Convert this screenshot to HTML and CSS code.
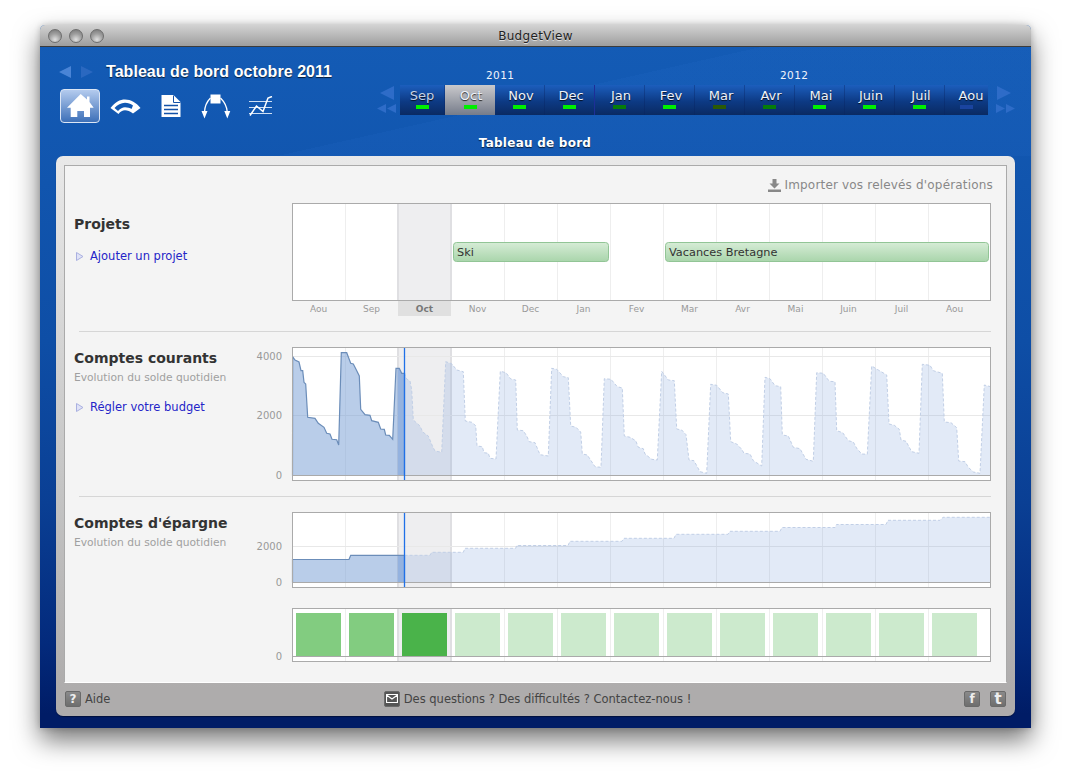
FILE: index.html
```html
<!DOCTYPE html>
<html lang="fr">
<head>
    <meta charset="UTF-8">
    <title>BudgetView</title>
    <link rel="stylesheet" href="styles.css">
</head>
<body>
<div class="window">
    <div class="titlebar">
        <div class="lights"><span class="light"></span><span class="light"></span><span class="light"></span></div>
        <div class="window-title">BudgetView</div>
    </div>

    <div class="header">
        <div class="header-top">
            <div class="nav">
                <div class="nav-title">
                    <svg class="nav-arrows" width="35" height="14" viewBox="0 0 35 14">
                        <path d="M0 7 12 1V13Z" fill="#4a84d6"/>
                        <path d="M22 1 34 7 22 13Z" fill="#2a68c0"/>
                    </svg>
                    <h1>Tableau de bord octobre 2011</h1>
                </div>
                <div class="nav-icons">
                    <div class="home-btn">
                        <svg width="40" height="34" viewBox="60 88 40 34">
                            <path fill="#fff" fill-rule="evenodd" d="M80.7 93 87 98.6V95.5H89.5V100.9L93.7 106.8H90V116H84V110H77.3V116H70.7V106.8H67Z"/>
                        </svg>
                    </div>
                    <svg class="nav-icon nav-icon-gauge" width="32" height="20" viewBox="110 94 32 20">
                        <path fill="#fff" fill-rule="evenodd" d="M110.5 106C115 100 120 97.5 125 97.5C131 97.5 136 100.5 140.5 106L133 111.5C130 109 127.5 108.300 125 108.300C122.500 108.300 120.500 109.500 118.500 112ZM114.500 106 118 109C120.500 106.500 122.500 105.300 125 105.300C127.500 105.300 130 106 131.500 107L133 103.500C130.500 101.500 128 100.700 125 100.700C121 100.700 117.500 102.800 114.500 106Z"/>
                    </svg>
                    <svg class="nav-icon" width="20" height="23" viewBox="161 94 20 23">
                        <path fill="#fff" d="M161.500 94H173.500L180.500 101V116H161.500Z"/>
                        <path stroke="#1352a8" fill="none" d="M173.500 94.500V101.500H180.500"/>
                        <path stroke="#1352a8" stroke-width="1.500" d="M164 104.500H178M164 108.500H178M164 112.500H178"/>
                    </svg>
                    <svg class="nav-icon" width="32" height="25" viewBox="200 92 32 25">
                        <path fill="#fff" d="M210.500 92.500H220.500V101.500H210.500Z"/>
                        <path fill="none" stroke="#fff" stroke-width="1.300" d="M210.500 96C207 99.500 204.800 104 204.500 110M220.500 96C224 99.500 226.800 104 227.300 110"/>
                        <path fill="#fff" d="M201.500 109H207.500L204.500 116.500ZM224.300 109H230.300L227.300 116.500Z"/>
                    </svg>
                    <svg class="nav-icon nav-icon-chart" width="24" height="21" viewBox="249 95 24 21">
                        <path stroke="#cfe0f5" stroke-width="1" d="M249 100.500H272M249 106.500H272M249 112.500H272"/>
                        <path fill="none" stroke="#fff" stroke-width="1.500" d="M250 114.500 256.500 105 263 110.500 268 97 272 95.500"/>
                    </svg>
                </div>
            </div>

            <div class="timeline">
                <div class="years">
                    <span class="year year-2011">2011</span>
                    <span class="year year-2012">2012</span>
                </div>
                <div class="timeline-row">
                    <svg class="scroll" width="22" height="30" viewBox="0 0 22 30">
                        <path d="M4 8 18 1V15ZM1 23.500 10 19V28ZM11 23.500 20 19V28Z" fill="#2e6cc8"/>
                    </svg>
                    <div class="months">
                        <div class="month month-first"><span>Sep</span><i class="lvl ok"></i></div>
                        <div class="month selected"><span>Oct</span><i class="lvl ok"></i></div>
                        <div class="month"><span>Nov</span><i class="lvl ok"></i></div>
                        <div class="month year-end"><span>Dec</span><i class="lvl ok"></i></div>
                        <div class="month"><span>Jan</span><i class="lvl mid"></i></div>
                        <div class="month"><span>Fev</span><i class="lvl ok"></i></div>
                        <div class="month"><span>Mar</span><i class="lvl low"></i></div>
                        <div class="month"><span>Avr</span><i class="lvl mid"></i></div>
                        <div class="month"><span>Mai</span><i class="lvl ok"></i></div>
                        <div class="month"><span>Juin</span><i class="lvl ok"></i></div>
                        <div class="month"><span>Juil</span><i class="lvl ok"></i></div>
                        <div class="month month-last"><span>Aou</span><i class="lvl none"></i></div>
                    </div>
                    <svg class="scroll" width="24" height="30" viewBox="0 0 24 30">
                        <path d="M20 8 6 1V15ZM14 23.500 5 19V28ZM24 23.500 15 19V28Z" fill="#2e6cc8"/>
                    </svg>
                </div>
            </div>
        </div>
        <div class="page-title">Tableau de bord</div>
    </div>

    <div class="panel">
        <div class="content">
            <div class="import">
                <svg width="13" height="13" viewBox="0 0 13 13">
                    <path fill="#888" d="M4.500 0H8.500V4.500H11.500L6.500 9.500 1.500 4.500H4.500ZM0 10.500H13V13H0Z"/>
                </svg>
                <span>Importer vos relevés d'opérations</span>
            </div>

            <section class="row">
                <div class="side side-projects">
                    <h2>Projets</h2>
                    <a class="link link-projects"><svg width="8" height="9" viewBox="0 0 8 9"><path d="M.5.5 7 4.500.5 8.500Z" fill="#dfe2f6" stroke="#aab0e0"/></svg>Ajouter un projet</a>
                </div>
                <div class="charts">
                    <svg class="chart" width="741" height="98" viewBox="250 203 741 98">
                        <defs>
                            <linearGradient id="barFill" x1="0" y1="0" x2="0" y2="1">
                                <stop offset="0" stop-color="#d6ecd6"/>
                                <stop offset="1" stop-color="#a9d5ab"/>
                            </linearGradient>
                            <g id="columns">
                                <rect x="398" y="0" width="53" height="800" fill="#eeeef0"/>
                                <path stroke="#eeeeee" d="M345.500 0V800M504.500 0V800M557.500 0V800M610.500 0V800M663.500 0V800M716.500 0V800M769.500 0V800M822.500 0V800M875.500 0V800M928.500 0V800"/>
                                <path stroke="#dfdfe2" stroke-width="2" d="M398 0V800M451 0V800"/>
                            </g>
                            <clipPath id="pastClip"><rect x="398" y="340" width="6.500" height="260"/></clipPath>
                        </defs>
                        <rect x="292" y="203" width="699" height="98" fill="#fff"/>
                        <use href="#columns"/>
                        <rect class="bar" x="453.500" y="242.500" width="155" height="19" rx="3"/>
                        <text class="bar-label" x="457" y="256">Ski</text>
                        <rect class="bar" x="665.500" y="242.500" width="323" height="19" rx="3"/>
                        <text class="bar-label" x="669" y="256">Vacances Bretagne</text>
                        <rect class="frame" x="292.500" y="203.500" width="698" height="97"/>
                    </svg>
                    <div class="axis">
                        <span>Aou</span><span>Sep</span><span class="axis-current">Oct</span><span>Nov</span><span>Dec</span><span>Jan</span><span>Fev</span><span>Mar</span><span>Avr</span><span>Mai</span><span>Juin</span><span>Juil</span><span>Aou</span>
                    </div>
                </div>
            </section>

            <hr class="divider">

            <section class="row">
                <div class="side">
                    <h2>Comptes courants</h2>
                    <p class="sub">Evolution du solde quotidien</p>
                    <a class="link link-budget"><svg width="8" height="9" viewBox="0 0 8 9"><path d="M.5.5 7 4.500.5 8.500Z" fill="#dfe2f6" stroke="#aab0e0"/></svg>Régler votre budget</a>
                </div>
                <div class="charts">
                    <svg class="chart" width="741" height="134" viewBox="250 347 741 134">
                        <rect x="292" y="347" width="699" height="134" fill="#fff"/>
                        <use href="#columns"/>
                        <path class="gridline" d="M293 356.500H990M293 415.500H990"/>
                        <polygon class="area-past-dark" clip-path="url(#pastClip)" points="292.500,475.500 292.700,356.700 295,360 299,362 301,370.700 302.700,370.700 304,382.300 305.700,384 307.700,417.300 315,418.300 318.300,423.300 324,427.300 326.700,433.300 330,434 332,439.300 336.700,439.700 338.700,445 341.300,352.700 346.700,352.700 350.700,363.300 353.300,364 356,369.300 359.300,376 360.700,409.300 365,414.700 370,415.300 371.700,420.700 378.300,422.300 380.700,429 384.300,429.300 385.700,435 389.300,435.300 392.700,439.300 396,368.300 399.300,368.300 401.700,373.300 404.500,373.300 404.500,475.500"/>
                        <polyline class="area-past" points="292.500,475.500 292.700,356.700 295,360 299,362 301,370.700 302.700,370.700 304,382.300 305.700,384 307.700,417.300 315,418.300 318.300,423.300 324,427.300 326.700,433.300 330,434 332,439.300 336.700,439.700 338.700,445 341.300,352.700 346.700,352.700 350.700,363.300 353.300,364 356,369.300 359.300,376 360.700,409.300 365,414.700 370,415.300 371.700,420.700 378.300,422.300 380.700,429 384.300,429.300 385.700,435 389.300,435.300 392.700,439.300 396,368.300 399.300,368.300 401.700,373.300 404.500,373.300 404.500,475.500"/>
                        <polyline class="area-future" points="404.500,373.300 406.700,379 410,381 411.700,390 413.300,420 420,426 422.700,432 428.300,436 432.700,446.700 435,451 441.700,452.300 445.700,361.700 451.700,363.700 456.700,370 463.300,371.700 465.300,421 471.700,422.300 475.700,425.700 477,446 482.300,446.700 484,452.700 488.300,453.300 490,458.300 496,459 500.300,371.300 506,372.700 510.700,379 515.700,380 517.300,430 523.300,430.700 526.700,436 529.300,441.700 535,442.700 540,454.700 548.300,456 551.700,368.300 556.700,369.300 563.300,376.700 568.300,377.700 570.700,426 576,427.300 580.700,432 582.300,454 587.300,455 595,466.700 601,467.300 604.300,378.700 611,379.300 617.300,386.700 622.300,388 624.300,436 630,437.300 635.700,440.700 638.300,447.300 643.300,448.700 645,454 651.700,459.300 657.300,460 661.700,371.300 668.300,380 674.300,380.700 676.700,429 681.700,430 686,434.700 689,460 694,460.700 700,471.700 706.700,473.300 710.700,384.300 716.700,385.300 722.700,392.700 728.300,394 730.700,441.700 736.700,444 741.700,449.300 744,453.300 750,454 753.300,460.700 761.700,466 765,377.300 770,378.700 775,385.700 780.700,386.700 782.300,435 788.300,436 793.300,447.300 800,448.700 806,459.300 813.300,461.300 816.700,372.700 823.300,373.300 829.300,381.300 835,381.700 836.700,430.700 842.700,432.700 848.300,440.700 853.300,442 856.700,448.300 861.700,454 867.300,454.300 871.700,366 878.300,370 886.700,375 889,424 894.300,425.300 899.300,429.300 901,440 906,441.300 911.700,451.700 919,453.300 922.300,364.300 930,365.300 933.300,370.700 942.300,373.300 944.300,422 951,422.700 956.700,427.700 958.700,461 965,461.700 968.300,467.300 973.300,472 980,473.300 984.300,385 990.500,386.700 990.500,475.500 404.500,475.500"/>
                        <path class="zero" d="M293 475.500H990"/>
                        <path class="cursor" d="M404.500 347V481"/>
                        <rect class="frame" x="292.500" y="347.500" width="698" height="133"/>
                        <text class="tick" x="282" y="360">4000</text>
                        <text class="tick" x="282" y="419">2000</text>
                        <text class="tick" x="282" y="479">0</text>
                    </svg>
                </div>
            </section>

            <hr class="divider">

            <section class="row">
                <div class="side">
                    <h2>Comptes d'épargne</h2>
                    <p class="sub">Evolution du solde quotidien</p>
                </div>
                <div class="charts charts-stack">
                    <svg class="chart" width="741" height="76" viewBox="250 512 741 76">
                        <rect x="292" y="512" width="699" height="76" fill="#fff"/>
                        <use href="#columns"/>
                        <path class="gridline" d="M293 546.500H990"/>
                        <polygon class="area-past-dark" clip-path="url(#pastClip)" points="292.500,582.500 292.500,559.500 349,559.500 350.700,555.300 404.500,555.300 404.500,582.500"/>
                        <polyline class="area-past" points="292.500,582.500 292.500,559.500 349,559.500 350.700,555.300 404.500,555.300 404.500,582.500"/>
                        <polyline class="area-future" points="404.500,555.300 430,555.300 431.700,552.300 463.300,552.300 465,548.300 515.700,548.300 516.700,545.500 568,545.500 570,541.300 622,541.300 624,538.300 674,538.300 676,534.300 728,534.300 730,531.300 780,531.300 782,527.500 835,527.500 836.500,524.500 886,524.500 888,520.300 940,520.300 943,517.300 990.500,517.300 990.500,582.500 404.500,582.500"/>
                        <path class="zero" d="M293 582.500H990"/>
                        <path class="cursor" d="M404.500 512V588"/>
                        <rect class="frame" x="292.500" y="512.500" width="698" height="75"/>
                        <text class="tick" x="282" y="550">2000</text>
                        <text class="tick" x="282" y="586">0</text>
                    </svg>
                    <svg class="chart" width="741" height="54" viewBox="250 608 741 54">
                        <rect x="292" y="608" width="699" height="54" fill="#fff"/>
                        <use href="#columns"/>
                        <rect class="cell cell-past" x="296" y="613" width="45" height="43"/>
                        <rect class="cell cell-past" x="349" y="613" width="45" height="43"/>
                        <rect class="cell cell-now" x="402" y="613" width="45" height="43"/>
                        <rect class="cell" x="455" y="613" width="45" height="43"/>
                        <rect class="cell" x="508" y="613" width="45" height="43"/>
                        <rect class="cell" x="561" y="613" width="45" height="43"/>
                        <rect class="cell" x="614" y="613" width="45" height="43"/>
                        <rect class="cell" x="667" y="613" width="45" height="43"/>
                        <rect class="cell" x="720" y="613" width="45" height="43"/>
                        <rect class="cell" x="773" y="613" width="45" height="43"/>
                        <rect class="cell" x="826" y="613" width="45" height="43"/>
                        <rect class="cell" x="879" y="613" width="45" height="43"/>
                        <rect class="cell" x="932" y="613" width="45" height="43"/>
                        <path class="zero" d="M293 656.500H990"/>
                        <rect class="frame" x="292.500" y="608.500" width="698" height="53"/>
                        <text class="tick" x="282" y="660">0</text>
                    </svg>
                </div>
            </section>
        </div>

        <div class="footer">
            <div class="foot-left"><span class="foot-icon">?</span><span>Aide</span></div>
            <div class="foot-center">
                <span class="foot-icon foot-icon-dark">
                    <svg width="12" height="9" viewBox="0 0 12 9"><path d="M.5.5H11.500V8.500H.5ZM.5 1 6 5 11.500 1" fill="none" stroke="#fff" stroke-width="1.200"/></svg>
                </span>
                <span>Des questions ? Des difficultés ? Contactez-nous !</span>
            </div>
            <div class="foot-right"><span class="foot-icon">f</span><span class="foot-icon foot-icon-t">t</span></div>
        </div>
    </div>
</div>
</body>
</html>
```

FILE: styles.css
```css
* {
    box-sizing: border-box;
}
body {
    margin: 0;
    height: 783px;
    overflow: hidden;
    background: #fff;
    font-family: "DejaVu Sans", sans-serif;
}
.window {
    width: 991px;
    height: 703px;
    margin: 25px 0 0 40px;
    display: flex;
    flex-direction: column;
    border-radius: 5px 5px 0 0;
    background: linear-gradient(180deg, #145cb6 0, #0e4ea6 45%, #0a3f94 68%, #032a7c 88%, #001c66 98%);
    box-shadow: 0 12px 26px rgba(0, 0, 0, .55), 0 0 6px rgba(0, 0, 0, .2);
}

/* title bar */
.titlebar {
    position: relative;
    height: 22px;
    flex: none;
    display: flex;
    justify-content: center;
    align-items: center;
    padding-top: 1px;
    border-radius: 5px 5px 0 0;
    background: linear-gradient(180deg, #d2d2d2, #9e9e9e);
    border-bottom: 1px solid #3c3c3c;
}
.lights {
    position: absolute;
    left: 8px;
    top: 4px;
    display: flex;
    gap: 7px;
}
.light {
    width: 14px;
    height: 14px;
    border-radius: 50%;
    border: 1px solid #6e6e6e;
    background: radial-gradient(circle at 50% 80%, #e0e0e0, #a0a0a0 50%, #747474);
}
.window-title {
    font-size: 12px;
    color: #222;
    letter-spacing: .3px;
    text-shadow: 0 1px 0 #ddd;
}

/* header */
.header {
    height: 109px;
    flex: none;
    padding: 14px 0 0 19px;
    background: linear-gradient(167.3deg, transparent 48.9%, rgba(60, 130, 230, .07) 48.9%);
}
.header-top {
    display: flex;
    height: 67px;
}
.nav {
    width: 317px;
    flex: none;
}
.nav-title {
    display: flex;
    align-items: center;
    gap: 12px;
}
.nav-arrows {
    flex: none;
}
h1 {
    margin: 0;
    font: bold 16px/22px "Liberation Sans", sans-serif;
    letter-spacing: .05px;
    color: #fff;
    text-shadow: 0 1px 1px rgba(0, 0, 0, .7);
}
.nav-icons {
    display: flex;
    align-items: center;
    margin: 6px 0 0 1px;
}
.home-btn {
    width: 40px;
    height: 34px;
    flex: none;
    border: 1px solid #dce6f5;
    border-radius: 4px;
    background: linear-gradient(180deg, #b4cbee, #3d70b8);
    display: flex;
}
.home-btn svg {
    margin: -1px;
}
.nav-icon {
    flex: none;
    margin-left: 19px;
}
.nav-icon-gauge {
    margin-left: 10px;
}
.nav-icon-chart {
    margin-left: 17px;
}

/* timeline */
.timeline {
    width: 640px;
    flex: none;
}
.years {
    position: relative;
    height: 24px;
}
.year {
    position: absolute;
    top: 8px;
    font-size: 10.5px;
    line-height: 12px;
    color: #f0f4fb;
    letter-spacing: .4px;
}
.year-2011 {
    left: 110px;
}
.year-2012 {
    left: 404px;
}
.timeline-row {
    display: flex;
    align-items: flex-start;
    height: 30px;
}
.scroll {
    flex: none;
}
.scroll:first-child {
    margin-right: 2px;
}
.scroll:last-child {
    margin-left: 3px;
}
.months {
    display: grid;
    grid-template-columns: 45px repeat(10, 50px) 43px;
    width: 588px;
    flex: none;
    height: 30px;
    background: linear-gradient(180deg, #1c5ebd, #0d3a84 55%, #0a2a62);
}
.month {
    display: flex;
    flex-direction: column;
    align-items: center;
    font-size: 13px;
    line-height: 16px;
    padding-top: 3px;
    color: #eef3fb;
    text-shadow: 0 1px 1px rgba(0, 0, 0, .8);
    border-right: 1px solid rgba(10, 35, 95, .35);
}
.month span {
    padding-left: 3px;
}
.month-first {
    color: #c6d3e6;
}
.month-first span {
    padding-left: 0;
}
.month-last {
    border-right: 0;
}
.month-last span {
    padding-left: 9px;
}
.selected {
    background: linear-gradient(180deg, #c9c9cc, #767c8a);
    border-right: 0;
}
.selected span {
    padding-left: 2px;
}
.year-end {
    border-right-color: #1d2f98;
}
.lvl {
    width: 13px;
    height: 4px;
    margin-top: 1px;
}
.ok {
    background: #00ef00;
}
.mid {
    background: #067d0a;
}
.low {
    background: #2b5a05;
}
.none {
    background: #1a44a0;
}
.page-title {
    text-align: center;
    font-size: 12px;
    font-weight: bold;
    line-height: 16px;
    margin: 7px 0 0 -20px;
    color: #fff;
    letter-spacing: .25px;
    text-shadow: 0 1px 1px rgba(0, 0, 0, .7);
}

/* panel */
.panel {
    width: 959px;
    height: 560px;
    margin-left: 16px;
    padding: 9px 8px 0;
    flex: none;
    display: flex;
    flex-direction: column;
    border-radius: 7px;
    background: linear-gradient(180deg, #e9e9e9, #c4c4c4 60%, #aeacac 95%);
    box-shadow: 0 1px 1px rgba(0, 0, 0, .4);
}
.content {
    height: 518px;
    flex: none;
    padding-left: 9px;
    border: 1px solid #aaa;
    border-bottom: 1px solid #fff;
    background: #f4f4f4;
}
.import {
    height: 37px;
    display: flex;
    justify-content: flex-end;
    align-items: center;
    gap: 3px;
    padding: 1px 13px 0 0;
    font-size: 12px;
    letter-spacing: .18px;
    color: #888;
}
.row {
    display: grid;
    grid-template-columns: 176px 741px;
}
.side {
    padding-top: 1px;
}
.side-projects {
    padding-top: 11px;
}
h2 {
    margin: 0;
    font-size: 14px;
    line-height: 20px;
    font-weight: bold;
    color: #333;
}
.sub {
    margin: 3px 0 0;
    font-size: 10.7px;
    line-height: 14px;
    color: #a0a0a0;
}
.link {
    display: flex;
    align-items: center;
    gap: 6px;
    padding-left: 2px;
    font-size: 11.5px;
    line-height: 16px;
    color: #2424c8;
}
.link-projects {
    margin-top: 14px;
}
.link-budget {
    margin-top: 14px;
}
.charts-stack {
    display: flex;
    flex-direction: column;
    gap: 20px;
}
.chart {
    display: block;
}
.axis {
    display: grid;
    grid-template-columns: repeat(13, 53px);
    grid-template-rows: 15px;
    margin-left: 42px;
    font-size: 9px;
    line-height: 17px;
    text-align: center;
    color: #999;
}
.axis-current {
    background: #e0e0e0;
    color: #777;
    font-weight: bold;
}
.divider {
    width: 912px;
    height: 1px;
    margin: 15px 0 15px 5px;
    border: 0;
    background: #d6d6d6;
}

/* chart parts */
.frame {
    fill: none;
    stroke: #aaa;
}
.gridline {
    stroke: #e8e8e8;
}
.zero {
    stroke: #aaa;
}
.cursor {
    stroke: #1f70e8;
    stroke-width: 1.3;
}
.tick {
    font-size: 10px;
    fill: #999;
    text-anchor: end;
}
.area-past {
    fill: rgba(115, 155, 211, .5);
    stroke: #6b8db9;
    stroke-width: 1.2;
}
.area-past-dark {
    fill: #b5c9eb;
}
.area-future {
    fill: rgba(123, 160, 219, .22);
    stroke: #c1cfe6;
    stroke-width: 1;
    stroke-dasharray: 3 2;
}
.bar {
    fill: url(#barFill);
    stroke: #92c596;
}
.bar-label {
    font-size: 11.3px;
    fill: #333;
}
.cell {
    fill: #cceacd;
}
.cell-past {
    fill: #82cc80;
}
.cell-now {
    fill: #4ab34a;
}

/* footer */
.footer {
    flex: 1;
    display: grid;
    grid-template-columns: 1fr auto 1fr;
    align-items: center;
    padding: 0 1px 2px;
    font-size: 11.5px;
    color: #444;
}
.foot-left, .foot-center {
    display: flex;
    align-items: center;
    gap: 4px;
}
.foot-center {
    margin-left: 4px;
}
.foot-right {
    display: flex;
    justify-content: flex-end;
    gap: 10px;
}
.foot-icon {
    width: 16px;
    height: 16px;
    display: flex;
    justify-content: center;
    align-items: center;
    border: 1px solid #6a6a6a;
    border-radius: 2px;
    background: linear-gradient(180deg, #8a8a8a, #6e6e6e);
    color: #eee;
    font-size: 12px;
    font-weight: bold;
}
.foot-icon-dark {
    background: #555;
}
.foot-icon-t {
    font-size: 15px;
}
```
